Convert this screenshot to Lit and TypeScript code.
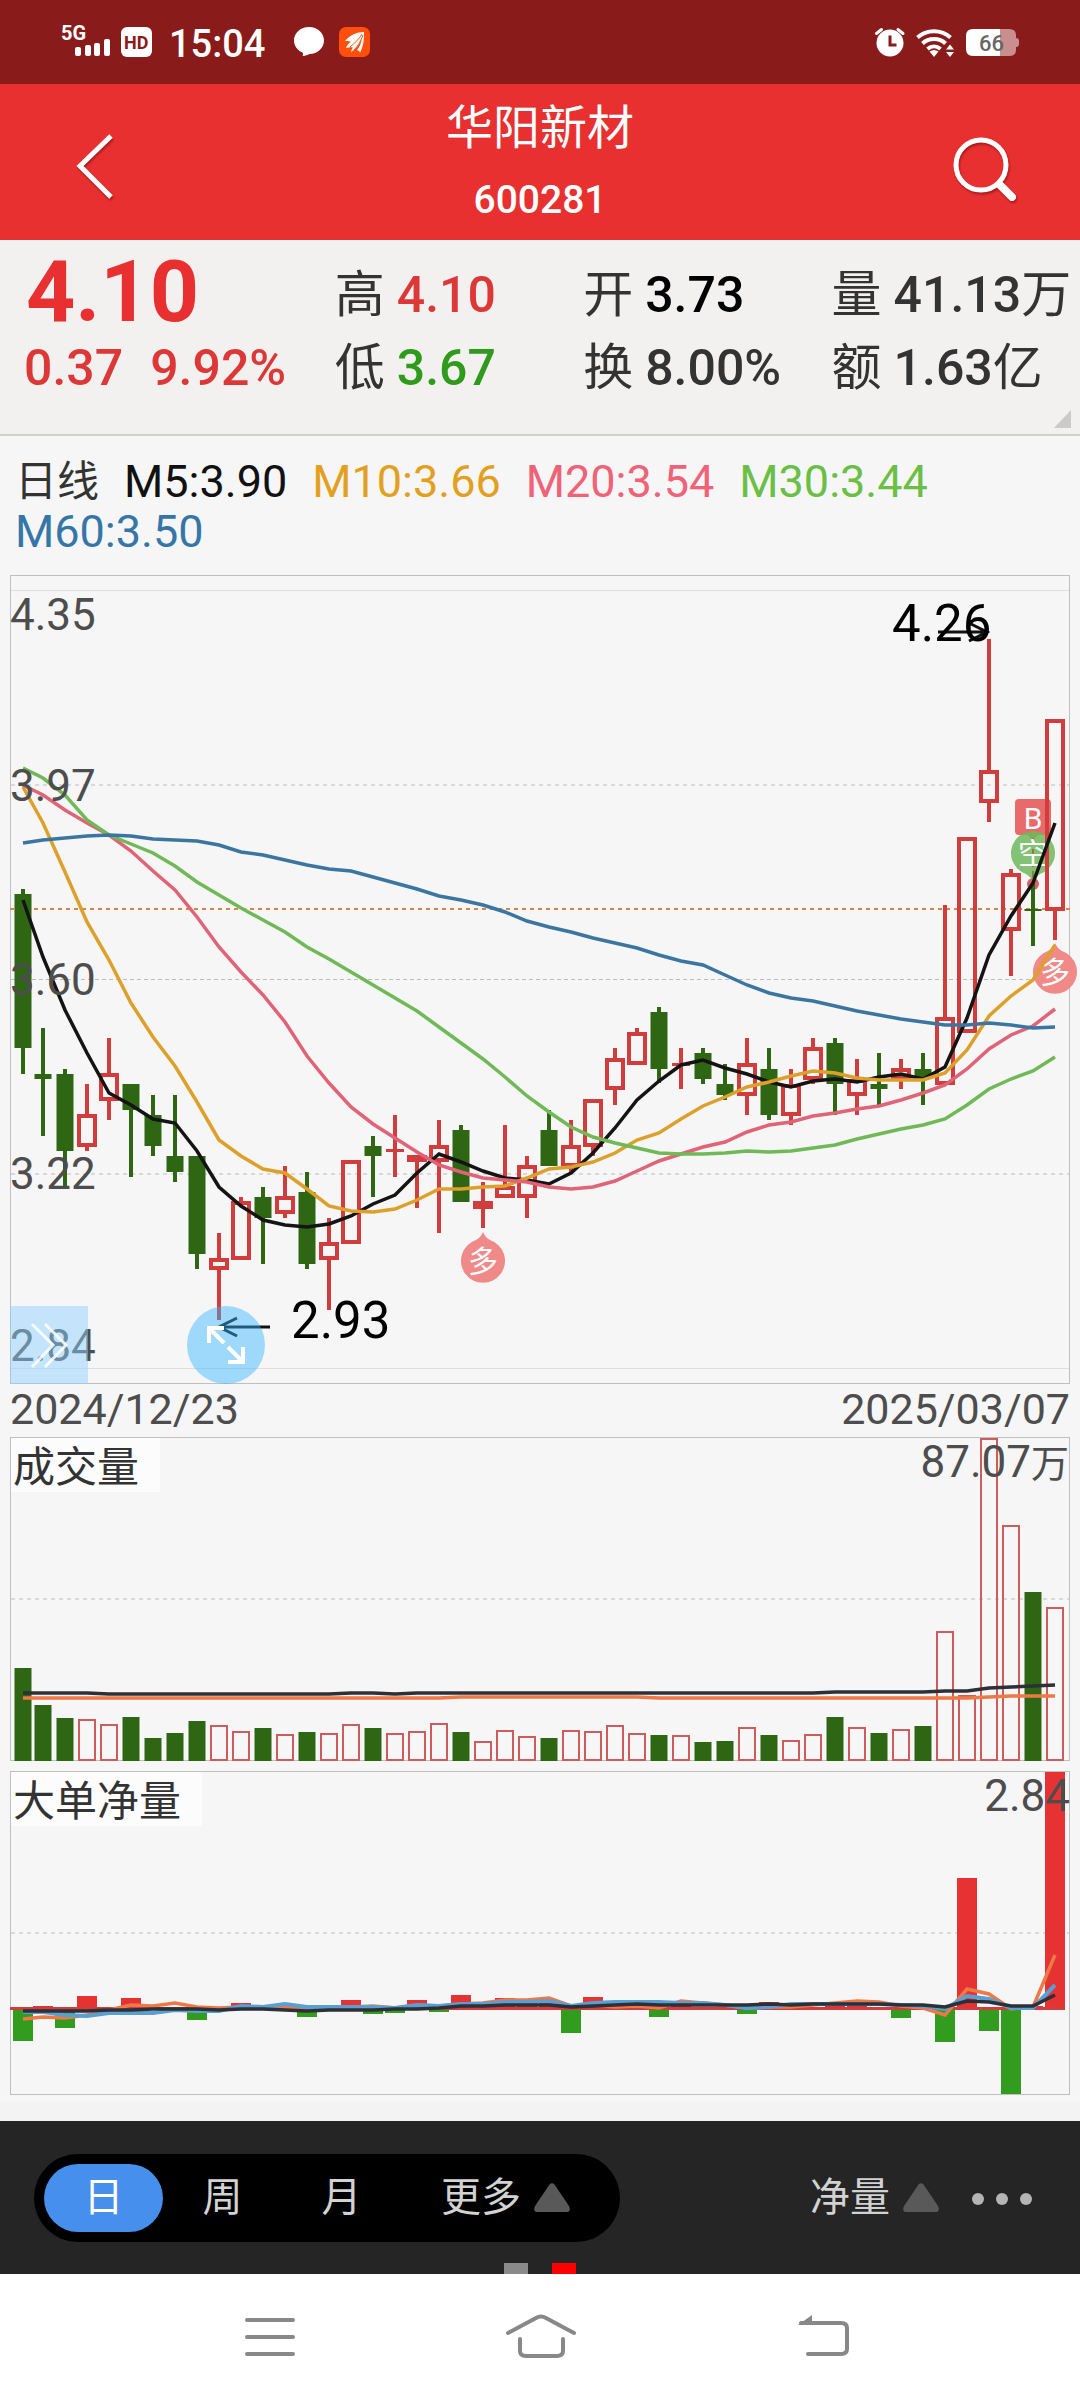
import { LitElement, html, svg, css } from "lit";
import { customElement, state } from "lit/decorators.js";
import { classMap } from "lit/directives/class-map.js";

type Side = "r" | "g";
/** side, high, body top, body bottom, low (chart units) */
type Candle = [Side, number, number, number, number];

const xAt = (i: number): number => (i === 0 ? 23 : 21 + 22 * i);

const CANDLES: Candle[] = [
  ["g", 889, 894, 1048, 1074], ["g", 1028, 1074, 1079, 1136], ["g", 1069, 1074, 1151, 1187],
  ["r", 1084, 1114, 1147, 1151], ["r", 1038, 1073, 1101, 1120], ["g", 1084, 1084, 1110, 1177],
  ["g", 1095, 1115, 1146, 1156], ["g", 1095, 1156, 1172, 1182], ["g", 1156, 1156, 1254, 1269],
  ["r", 1233, 1258, 1270, 1320], ["r", 1197, 1201, 1260, 1260], ["g", 1187, 1197, 1218, 1264],
  ["r", 1166, 1196, 1214, 1218], ["g", 1172, 1192, 1264, 1269], ["r", 1218, 1242, 1260, 1310],
  ["r", 1160, 1160, 1244, 1244], ["g", 1136, 1146, 1156, 1197], ["r", 1115, 1149, 1152, 1177],
  ["r", 1155, 1155, 1162, 1208], ["r", 1120, 1145, 1162, 1233], ["g", 1125, 1130, 1202, 1202],
  ["r", 1182, 1201, 1209, 1228], ["r", 1125, 1186, 1198, 1198], ["r", 1156, 1165, 1198, 1218],
  ["g", 1110, 1130, 1166, 1166], ["r", 1120, 1145, 1167, 1173], ["r", 1099, 1099, 1147, 1156],
  ["r", 1048, 1058, 1090, 1105], ["r", 1028, 1032, 1065, 1065], ["g", 1007, 1012, 1069, 1083],
  ["r", 1048, 1063, 1066, 1089], ["g", 1048, 1053, 1079, 1084], ["g", 1064, 1084, 1095, 1100],
  ["r", 1038, 1063, 1096, 1115], ["g", 1048, 1069, 1115, 1120], ["r", 1069, 1084, 1116, 1125],
  ["r", 1038, 1047, 1080, 1084], ["g", 1038, 1043, 1084, 1115], ["r", 1059, 1079, 1096, 1115],
  ["g", 1053, 1084, 1089, 1105], ["r", 1059, 1068, 1080, 1089], ["g", 1053, 1069, 1079, 1105],
  ["r", 905, 1017, 1085, 1085], ["r", 837, 837, 1033, 1033], ["r", 639, 770, 803, 822],
  ["r", 869, 873, 931, 976], ["g", 884, 909, 911, 946], ["r", 719, 719, 911, 940],
];

const MA5 = [900, 957, 1010, 1053, 1093, 1105, 1119, 1123, 1151, 1187, 1206, 1220, 1225, 1227, 1224, 1216, 1204, 1195, 1173, 1154, 1162, 1171, 1178, 1180, 1184, 1173, 1153, 1128, 1100, 1081, 1065, 1060, 1068, 1074, 1082, 1087, 1081, 1079, 1082, 1077, 1074, 1079, 1067, 1018, 955, 916, 883, 823];
const MA10 = [787, 823, 872, 922, 960, 1003, 1037, 1066, 1102, 1140, 1156, 1169, 1173, 1189, 1206, 1211, 1212, 1209, 1200, 1189, 1189, 1187, 1186, 1178, 1169, 1167, 1162, 1153, 1140, 1133, 1119, 1106, 1097, 1087, 1082, 1076, 1071, 1073, 1078, 1080, 1080, 1080, 1073, 1050, 1016, 996, 980, 945];
const MA20 = [785, 795, 810, 823, 835, 851, 871, 890, 917, 947, 972, 995, 1022, 1056, 1083, 1107, 1124, 1138, 1152, 1165, 1172, 1178, 1180, 1182, 1187, 1189, 1187, 1181, 1171, 1161, 1154, 1147, 1142, 1132, 1125, 1122, 1116, 1113, 1109, 1106, 1100, 1093, 1085, 1069, 1049, 1035, 1026, 1009];
const MA30 = [768, 778, 795, 820, 835, 844, 853, 866, 882, 895, 908, 920, 932, 947, 959, 972, 985, 998, 1011, 1027, 1043, 1059, 1077, 1096, 1112, 1127, 1137, 1143, 1148, 1153, 1154, 1154, 1153, 1151, 1152, 1151, 1148, 1145, 1139, 1134, 1129, 1125, 1119, 1105, 1089, 1079, 1071, 1057];
const MA60 = [843, 840, 838, 836, 835, 836, 839, 840, 841, 845, 852, 855, 860, 865, 869, 871, 877, 883, 889, 896, 900, 905, 912, 921, 927, 932, 938, 943, 948, 955, 961, 965, 975, 985, 993, 998, 1001, 1006, 1011, 1015, 1019, 1022, 1025, 1025, 1023, 1025, 1028, 1027];

const VOLUMES = [93, 56, 43, 42, 37, 44, 23, 28, 40, 36, 30, 33, 27, 29, 28, 37, 33, 28, 30, 38, 29, 20, 31, 25, 23, 31, 30, 36, 28, 26, 26, 19, 20, 34, 26, 21, 27, 44, 34, 28, 32, 35, 130, 66, 323, 236, 169, 154];
const VOL_MA_A = [1693, 1693, 1693, 1693, ...Array(11).fill(1694), 1693, 1693, 1694, ...Array(19).fill(1693), 1692, 1692, 1692, 1692, 1692, 1691, 1691, 1688, 1687, 1686, 1685];
const VOL_MA_B = [...Array(20).fill(1698), ...Array(9).fill(1697), ...Array(15).fill(1698), 1697, 1696, 1696, 1696];

/** Net flow per day: positive rises above the zero line. */
const FLOW: Record<number, number> = {
  0: -32, 1: 3, 2: -19, 3: 13, 5: 11, 8: -11, 10: 6, 13: -8, 15: 9, 16: -5, 17: -4, 18: 9,
  19: -3, 20: 14, 21: 5, 22: 11, 23: 7, 24: 7, 25: -24, 26: 12, 27: 3, 28: 9, 29: -8, 30: 4, 33: -5,
  34: 7, 37: 5, 38: 3, 40: -9, 42: -33, 43: 131, 44: -22, 45: -85, 46: 3, 47: 237,
};
const FLOW_A = [2019, 2017, 2018, 2015, 2010, 2005, 2006, 2003, 2007, 2008, 2007, 2008, 2007, 2010, 2007, 2007, 2006, 2008, 2005, 2006, 2004, 2003, 2000, 2000, 1998, 2006, 2005, 2007, 2006, 2008, 2001, 2003, 2005, 2008, 2007, 2007, 2005, 2003, 2001, 2002, 2006, 2008, 2015, 1989, 1994, 2009, 2007, 1955];
const FLOW_B = [2012, 2012, 2015, 2016, 2013, 2013, 2013, 2010, 2011, 2011, 2006, 2007, 2004, 2007, 2007, 2007, 2007, 2008, 2005, 2006, 2004, 2004, 2002, 2002, 2001, 2006, 2003, 2002, 2002, 2002, 2003, 2003, 2005, 2008, 2007, 2004, 2004, 2004, 2004, 2004, 2005, 2006, 2009, 1996, 1999, 2008, 2008, 1985];
const FLOW_C = [2011, 2011, 2011, 2011, 2010, 2010, 2009, 2009, 2009, 2010, 2009, 2009, 2010, 2011, 2010, 2010, 2010, 2009, 2009, 2008, 2006, 2006, 2005, 2005, 2005, 2007, 2006, 2005, 2004, 2005, 2005, 2005, 2005, 2005, 2004, 2005, 2004, 2004, 2004, 2004, 2005, 2005, 2007, 2001, 2002, 2006, 2006, 1995];

const line = (ys: number[], cls: string) =>
  svg`<polyline class="line ${cls}" points=${ys.map((y, i) => `${xAt(i)},${y}`).join(" ")}></polyline>`;

@customElement("status-bar")
export class StatusBar extends LitElement {
  static styles = css`
    :host { display: block; background: #8a1b1b; }
    .bar { display: flex; align-items: center; justify-content: space-between; height: 84px; padding: 0 60px; font-family: Roboto, sans-serif; color: #fff; }
    .side { display: flex; align-items: center; }
    svg { display: block; }
    .time { font-size: 38px; font-weight: 500; line-height: 44px; margin: 4px 28px 0 16px; }
    text { font-family: Roboto, sans-serif; font-weight: 700; }
    .charge { font-weight: 500; }
  `;
  render() {
    return html`<div class="bar">
      <div class="side">
        <svg width="93" height="48" viewBox="60 18 93 48" role="img" aria-label="5G HD">
          <text x="61" y="40" font-size="20" fill="#fff">5G</text>
          <g fill="#fff">
            <rect x="75" y="47" width="6" height="9" rx="2"></rect>
            <rect x="85" y="45" width="6" height="11" rx="2"></rect>
            <rect x="94" y="43" width="6" height="13" rx="2"></rect>
            <rect x="104" y="39" width="6" height="17" rx="2"></rect>
            <rect x="121" y="27" width="31" height="30" rx="6"></rect>
          </g>
          <text x="124" y="49" font-size="18" fill="#8a1b1b">HD</text>
        </svg>
        <span class="time">15:04</span>
        <svg width="78" height="32" viewBox="293 26 78 32" aria-hidden="true">
          <path fill="#fff" d="M309 27c8.500 0 15 6 15 13.500S317.500 54 309.500 54c-2 1-4 1.800-7 2 .6-1 .8-2 .3-3.300C297.500 50.500 294 46 294 40.500 294 33 300.500 27 309 27z"></path>
          <rect x="339" y="27" width="31" height="30" rx="7" fill="#ff4f0c"></rect>
          <path fill="#fff" d="M364 32c-7 0-14 3-19 9 3 0 5 .3 6 1-2 .8-4 3-5 6 3-1 5-1 7-.5-1 1-1.500 2.500-2 4.500 5-3 9-8 11-14-1 6-3 10-5 12 2 .5 3 1.500 3 3 3-6 4.500-13 4-21z"></path>
          <path stroke="#ff4f0c" fill="none" d="M362 34c-3 5-7 9-12 13M363 35c-2 6-5 11-9 15"></path>
        </svg>
      </div>
      <div class="side">
        <svg width="146" height="32" viewBox="874 26 146 32" role="img" aria-label="66%">
          <circle cx="890" cy="43" r="13.500" fill="#fff"></circle>
          <path stroke="#fff" stroke-width="3" stroke-linecap="round" d="M876.500 33.500l5-4M903 33.500l-5-4"></path>
          <path stroke="#8a1b1b" stroke-width="3" fill="none" d="M890 35.500v9.500h6.500"></path>
          <g fill="none" stroke="#fff" stroke-width="4">
            <path d="M917.500 37.500c9-8.500 24-8.500 33 0"></path>
            <path d="M922.500 43.500c6-6 17-6 23 0"></path>
            <path d="M927.500 49c4-3.500 9-3.500 13 0"></path>
          </g>
          <path fill="#fff" d="M929.500 51.500c3-2 6-2 9 0l-4.500 5.500zM950 44.500l4 5h-8zM950 57l4-5h-8z"></path>
          <path fill="#c98e8e" d="M998 29h11q7 0 7 6v3q3 0 3 3v3q0 3-3 3v3q0 6-7 6h-11z"></path>
          <path fill="#fff" d="M973 29h27v27h-27q-7 0-7-7v-13q0-7 7-7z"></path>
          <text class="charge" x="979" y="51" font-size="22" fill="#666">66</text>
        </svg>
      </div>
    </div>`;
  }
}

@customElement("quote-summary")
export class QuoteSummary extends LitElement {
  static styles = css`
    :host { display: block; background: #f2f1ef; border-bottom: 2px solid #d0d0ce; position: relative; font-family: Roboto, "Noto Sans CJK SC", sans-serif; color: #333; }
    .grid { display: grid; grid-template-columns: 31% 23% 23% 23%; grid-auto-rows: 73px; align-items: center; padding: 18px 0 30px; margin: 0; }
    .last { font-size: 86px; font-weight: 700; line-height: 67px; padding: 0 0 6px 26px; color: #e83031; }
    .change { display: flex; gap: 27px; padding-left: 24px; font-size: 50px; font-weight: 500; line-height: 60px; color: #dd3838; }
    .cell { display: flex; align-items: center; gap: 12px; white-space: nowrap; line-height: 60px; font-size: 50px; }
    dd { margin: 0; font-weight: 500; }
    .unit { font-weight: 400; }
    .up { color: #dd3838; }
    .down { color: #2f9a1c; }
    .flat { color: #000; }
    .corner { position: absolute; right: 9px; bottom: 6px; width: 17px; height: 18px; background: #cacaca; clip-path: polygon(100% 0, 100% 100%, 0 100%); }
  `;
  private cell(label: string, value: string, tone = "", unit = "") {
    return html`<div class="cell"><dt>${label}</dt><dd class=${tone}>${value}<span class="unit">${unit}</span></dd></div>`;
  }
  render() {
    return html`<dl class="grid">
        <div class="last">4.10</div>
        ${this.cell("高", "4.10", "up")} ${this.cell("开", "3.73", "flat")} ${this.cell("量", "41.13", "", "万")}
        <div class="change"><span>0.37</span><span>9.92%</span></div>
        ${this.cell("低", "3.67", "down")} ${this.cell("换", "8.00%")} ${this.cell("额", "1.63", "", "亿")}
      </dl>
      <div class="corner"></div>`;
  }
}

@customElement("price-charts")
export class PriceCharts extends LitElement {
  static styles = css`
    :host { display: block; background: #f6f6f6; font-family: Roboto, "Noto Sans CJK SC", sans-serif; color: #4d4d4d; padding-bottom: 6px; }
    .legend { display: flex; flex-wrap: wrap; column-gap: 25px; padding: 21px 14px 18px 15px; font-size: 45px; line-height: 50px; }
    .kind { font-size: 42px; color: #333; }
    .t5 { color: #111; }
    .t10 { color: #e3a01f; }
    .t20 { color: #ef6277; }
    .t30 { color: #6abf45; }
    .t60 { color: #3576a6; }
    .panel { position: relative; }
    .panel + .panel { margin-top: 9px; }
    svg { display: block; width: 100%; height: auto; }
    button { font: inherit; border: 0; margin: 0; padding: 0; cursor: pointer; }
    .fold { position: absolute; left: 10px; bottom: 0; width: 78px; height: 78px; background: rgba(140, 210, 254, 0.48); }
    .expand { position: absolute; left: 187px; bottom: 0; width: 78px; height: 78px; border-radius: 50%; background: rgba(50, 180, 255, 0.45); }
    .name { position: absolute; left: 11px; top: 1px; height: 54px; padding: 6px 21px 0 2px; background: #fcfcfc; color: #333; font-size: 42px; line-height: 48px; }
    .dates { display: flex; justify-content: space-between; padding: 0 10px 3px; font-size: 43px; line-height: 50px; }
    .line { fill: none; stroke-width: 3.5; }
    .m5 { stroke: #141414; }
    .m10 { stroke: #dda02b; }
    .m20 { stroke: #e06377; }
    .m30 { stroke: #6fb956; }
    .m60 { stroke: #3b76a1; }
    .dark { stroke: #2d3036; }
    .orange { stroke: #ee7846; }
    .sky { stroke: #5a9fd4; stroke-width: 4; }
    .frame { fill: none; stroke: #c0c0c0; stroke-width: 1; }
    .solid { stroke: #dedede; }
    .dash { stroke: #dadada; stroke-width: 2; stroke-dasharray: 4 4; }
    .thin { stroke: #bdbdbd; stroke-width: 1; stroke-dasharray: 4 3; }
    .ref { stroke: #d98543; stroke-width: 2; stroke-dasharray: 4 4; }
    .g { fill: #2f6614; }
    .r { fill: #d13c3c; }
    .hollow { fill: none; stroke: #d13c3c; stroke-width: 4; }
    .vol { fill: none; stroke: #cb5d5d; stroke-width: 2; }
    .in { fill: #e63232; }
    .out { fill: #319c1d; }
    .axis { font-size: 44px; fill: #4d4d4d; }
    .unit { font-size: 38px; }
    .peak { font-size: 51px; fill: #000; }
    .mark { font-size: 30px; fill: #fff; text-anchor: middle; }
    .arrow { fill: none; stroke: #111; stroke-width: 3; }
    .glyph { fill: none; stroke: #fff; }
  `;

  private candle([side, high, top, bottom, low]: Candle, i: number) {
    const x = xAt(i);
    if (side === "g") {
      return svg`<g class="g">
        <rect x=${x - 2} y=${high} width="4" height=${low - high}></rect>
        <rect x=${x - 8.5} y=${top} width="17" height=${bottom - top}></rect></g>`;
    }
    if (bottom - top < 4) {
      return svg`<g class="r">
        <rect x=${x - 2} y=${high} width="4" height=${low - high}></rect>
        <rect x=${x - 9} y=${top} width="18" height=${bottom - top}></rect></g>`;
    }
    return svg`<g>
      <rect class="r" x=${x - 2} y=${high} width="4" height=${top - high}></rect>
      <rect class="r" x=${x - 2} y=${bottom} width="4" height=${low - bottom}></rect>
      <rect class="hollow" x=${x - 8} y=${top + 2} width="16" height=${bottom - top - 4}></rect></g>`;
  }

  private longMark(x: number, y: number) {
    return svg`<path fill="#f08a88" d="M${x} ${y - 29}q2 5 7 8a22 22 0 1 1-14 0q5-3 7-8z"></path>
      <text class="mark" x=${x} y=${y + 11}>多</text>`;
  }

  private renderPrice() {
    return html`<svg viewBox="0 575 1080 809" role="img" aria-label="日线">
      <rect class="frame" x="10.5" y="575.5" width="1059" height="808"></rect>
      <path class="solid" d="M11 590.500H1069M11 1368.500H1069"></path>
      <path class="dash" d="M11 785H1069M11 1174H1069"></path>
      <path class="thin" d="M11 979.500H1069"></path>
      <path class="ref" d="M10 909H1070"></path>
      <path fill="#e96a6a" d="M1019 799h28q4 0 4 4v28q0 4-4 4h-9l-5 5-5-5h-9q-4 0-4-4v-28q0-4 4-4z"></path>
      <text class="mark" x="1033" y="829">B</text>
      <circle cx="1033" cy="884" r="6" fill="#d96065"></circle>
      <path fill="#6fb75c" fill-opacity="0.85" d="M1033 882q-2-5-7-8a22 22 0 1 1 14 0q-5 3-7 8z"></path>
      <path stroke="#8f6a36" stroke-width="1.500" stroke-dasharray="7 4" d="M1033 838V878"></path>
      <text class="mark" x="1033" y="864">空</text>
      ${this.longMark(483, 1261)} ${this.longMark(1055, 972)}
      ${CANDLES.map((c, i) => this.candle(c, i))}
      ${line(MA5, "m5")} ${line(MA10, "m10")} ${line(MA20, "m20")} ${line(MA30, "m30")} ${line(MA60, "m60")}
      <text class="axis" x="10" y="630">4.35</text>
      <text class="axis" x="10" y="801">3.97</text>
      <text class="axis" x="10" y="995">3.60</text>
      <text class="axis" x="10" y="1189">3.22</text>
      <text class="axis" x="10" y="1361">2.84</text>
      <path class="arrow" d="M938 632H987M969 623L987 632L969 641"></path>
      <text class="peak" x="892" y="641">4.26</text>
      <path class="arrow" d="M270 1327H219M237 1318L219 1327L237 1336"></path>
      <text class="peak" x="291" y="1338">2.93</text>
    </svg>`;
  }

  private renderVolume() {
    return html`<svg viewBox="0 1437 1080 325" role="img" aria-label="成交量">
      <rect class="frame" x="10.5" y="1437.5" width="1059" height="323"></rect>
      <path class="dash" d="M11 1599H1069"></path>
      ${VOLUMES.map((h, i) =>
        CANDLES[i][0] === "g"
          ? svg`<rect class="g" x=${xAt(i) - 8.5} y=${1761 - h} width="17" height=${h}></rect>`
          : svg`<rect class="vol" x=${xAt(i) - 8} y=${1762 - h} width="16" height=${h - 2}></rect>`
      )}
      ${line(VOL_MA_B, "orange")} ${line(VOL_MA_A, "dark")}
      <text class="axis" x="1069" y="1477" text-anchor="end">87.07<tspan class="unit">万</tspan></text>
    </svg>`;
  }

  private renderFlow() {
    return html`<svg viewBox="0 1771 1080 324" role="img" aria-label="大单净量">
      <rect class="frame" x="10.5" y="1771.5" width="1059" height="323"></rect>
      <path class="dash" d="M11 1933H1069"></path>
      ${Object.entries(FLOW).map(([k, v]) => {
        const x = xAt(Number(k)) - 10;
        return v > 0
          ? svg`<rect class="in" x=${x} y=${2009 - v} width="20" height=${v}></rect>`
          : svg`<rect class="out" x=${x} y="2009" width="20" height=${-v}></rect>`;
      })}
      <rect x="10" y="2007" width="1055" height="3" fill="#cf3d3d"></rect>
      ${line(FLOW_A, "orange")} ${line(FLOW_B, "sky")} ${line(FLOW_C, "dark")}
      <text class="axis" x="1070" y="1811" text-anchor="end">2.84</text>
    </svg>`;
  }

  render() {
    return html`
      <div class="legend">
        <span class="kind">日线</span>
        <span class="t5">M5:3.90</span>
        <span class="t10">M10:3.66</span>
        <span class="t20">M20:3.54</span>
        <span class="t30">M30:3.44</span>
        <span class="t60">M60:3.50</span>
      </div>
      <div class="panel">
        ${this.renderPrice()}
        <button class="fold" aria-label="展开">
          <svg viewBox="0 0 78 78"><path class="glyph" stroke-width="3" stroke-opacity="0.85" d="M22 18L43 39L22 61M35 18L56 39L35 61"></path></svg>
        </button>
        <button class="expand" aria-label="全屏">
          <svg viewBox="0 0 78 78"><path class="glyph" stroke-width="4" d="M37 37L22 22M22 37V22H37M41 41L56 56M56 41V56H41"></path></svg>
        </button>
      </div>
      <div class="dates"><span>2024/12/23</span><span>2025/03/07</span></div>
      <div class="panel">${this.renderVolume()}<button class="name">成交量</button></div>
      <div class="panel">${this.renderFlow()}<button class="name">大单净量</button></div>
    `;
  }
}

@customElement("app-root")
export class AppRoot extends LitElement {
  @state() private period = "日";

  static styles = css`
    :host { display: block; background: #f3f3f3; font-family: Roboto, "Noto Sans CJK SC", sans-serif; }
    * { box-sizing: border-box; }
    button { font: inherit; color: inherit; background: none; border: 0; margin: 0; padding: 0; cursor: pointer; display: flex; align-items: center; justify-content: center; }
    svg { display: block; }
    .head { display: flex; justify-content: space-between; align-items: center; height: 156px; padding: 0 50px 3px; background: #e83031; color: #fff; }
    .icon { width: 90px; height: 90px; }
    .title { text-align: center; margin: 0; font-weight: 400; font-size: 47px; line-height: 60px; }
    .code { text-align: center; font-size: 39px; font-weight: 500; line-height: 48px; margin-top: 18px; }
    .shadow { filter: drop-shadow(1px 2px 1px rgba(90, 0, 0, 0.45)); }
    .tools { position: relative; display: flex; justify-content: space-between; align-items: center; height: 153px; margin-top: 20px; padding: 0 48px 0 34px; background: #252525; color: #d2d2d2; font-size: 40px; line-height: 50px; }
    .tabs { display: flex; align-items: center; height: 88px; padding: 0 50px 0 10px; border-radius: 44px; background: #000; }
    .tab { width: 119px; height: 68px; border-radius: 34px; }
    .on { background: #468fed; color: #fff; }
    .more { gap: 13px; margin-left: 40px; height: 68px; }
    .right { display: flex; align-items: center; gap: 33px; }
    .metric { gap: 13px; }
    .pages { position: absolute; bottom: 0; left: 0; right: 0; display: flex; justify-content: center; gap: 24px; }
    .page { width: 24px; height: 11px; background: #8a8a8a; }
    .current { background: #f00; }
    .nav { display: grid; grid-template-columns: repeat(3, 25%); justify-content: center; height: 126px; background: #fff; }
    .nav path { fill: none; stroke: #888; stroke-width: 4; stroke-linecap: round; }
    .nav .tip { fill: #888; stroke: none; }
  `;

  private triangle() {
    return html`<svg width="36" height="30" viewBox="0 0 36 30" aria-hidden="true"><path fill="#595959" d="M15.500 1.500q2.500-2.500 5 0L35 23q2.500 6-3 6H4q-5.500 0-3-6z"></path></svg>`;
  }

  render() {
    return html`
      <status-bar></status-bar>
      <header class="head">
        <button class="icon" aria-label="返回">
          <svg class="shadow" width="90" height="90" viewBox="50 116 90 90"><path d="M111 136L80 166L111 197" fill="none" stroke="#fff" stroke-width="5"></path></svg>
        </button>
        <div>
          <h1 class="title">华阳新材</h1>
          <div class="code">600281</div>
        </div>
        <button class="icon" aria-label="搜索">
          <svg class="shadow" width="90" height="90" viewBox="940 116 90 90" fill="none" stroke="#fff"><circle cx="981" cy="165" r="25" stroke-width="5"></circle><path d="M1001 186L1012 197" stroke-width="8" stroke-linecap="round"></path></svg>
        </button>
      </header>
      <quote-summary></quote-summary>
      <price-charts></price-charts>
      <div class="tools">
        <div class="tabs">
          ${["日", "周", "月"].map(
            (p) => html`<button class=${classMap({ tab: true, on: p === this.period })} @click=${() => (this.period = p)}>${p}</button>`
          )}
          <button class="more">更多${this.triangle()}</button>
        </div>
        <div class="right">
          <button class="metric">净量${this.triangle()}</button>
          <button aria-label="菜单"><svg width="60" height="14" viewBox="0 0 60 14" fill="#b4b4b4"><circle cx="6" cy="8" r="6"></circle><circle cx="30" cy="8" r="6"></circle><circle cx="54" cy="8" r="6"></circle></svg></button>
        </div>
        <div class="pages"><span class="page"></span><span class="page current"></span></div>
      </div>
      <nav class="nav">
        <button aria-label="任务"><svg width="80" height="60" viewBox="231 2307 80 60"><path d="M248 2320H294M248 2337H294M248 2354H294"></path></svg></button>
        <button aria-label="主页"><svg width="80" height="60" viewBox="500 2307 80 60"><path d="M508 2333L536 2318Q541 2315 546 2318L574 2333M520 2339V2351Q520 2356 526 2356H557Q563 2356 563 2351V2339"></path></svg></button>
        <button aria-label="后退"><svg width="80" height="60" viewBox="770 2307 80 60"><path d="M801 2323H841Q847 2323 847 2328V2349Q847 2354 841 2354H808"></path><path class="tip" d="M798 2325L812 2315V2325z"></path></svg></button>
      </nav>
    `;
  }
}
